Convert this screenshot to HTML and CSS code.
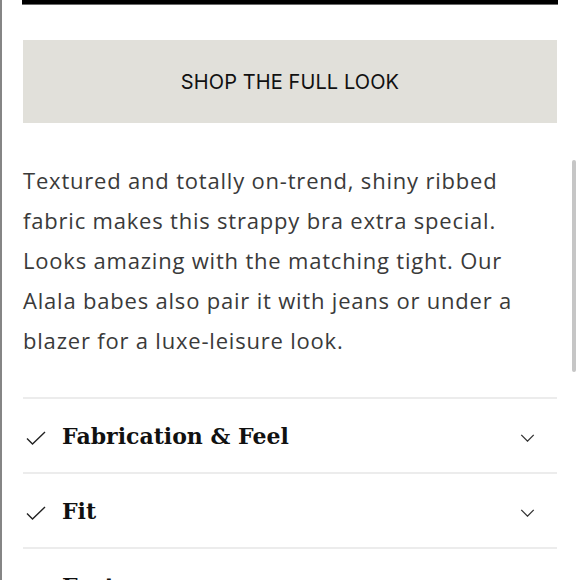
FILE: index.html
```html
<!DOCTYPE html>
<html lang="en">
<head>
<meta charset="utf-8">
<link rel="stylesheet" href="styles.css">
</head>
<body>
<div class="page">
  <div class="topbar"></div>
  <a class="shop-btn">SHOP THE FULL LOOK</a>
  <p class="desc">Textured and totally on-trend, shiny ribbed fabric makes this strappy bra extra special. Looks amazing with the matching tight. Our Alala babes also pair it with jeans or under a blazer for a luxe-leisure look.</p>
  <ul class="accordion">
    <li class="row">
      <svg class="check" viewBox="0 0 20 14" width="20" height="14"><path d="M1 7.5 L6.5 13 L19 1" fill="none" stroke="#222" stroke-width="1.4"/></svg>
      <span class="title">Fabrication &amp; Feel</span>
      <svg class="chev" viewBox="0 0 16 9" width="15" height="8"><path d="M1 1 L8 8 L15 1" fill="none" stroke="#333" stroke-width="1.5"/></svg>
    </li>
    <li class="row">
      <svg class="check" viewBox="0 0 20 14" width="20" height="14"><path d="M1 7.5 L6.5 13 L19 1" fill="none" stroke="#222" stroke-width="1.4"/></svg>
      <span class="title">Fit</span>
      <svg class="chev" viewBox="0 0 16 9" width="15" height="8"><path d="M1 1 L8 8 L15 1" fill="none" stroke="#333" stroke-width="1.5"/></svg>
    </li>
    <li class="row">
      <svg class="check" viewBox="0 0 20 14" width="20" height="14"><path d="M1 7.5 L6.5 13 L19 1" fill="none" stroke="#222" stroke-width="1.4"/></svg>
      <span class="title">Features</span>
      <svg class="chev" viewBox="0 0 16 9" width="15" height="8"><path d="M1 1 L8 8 L15 1" fill="none" stroke="#333" stroke-width="1.5"/></svg>
    </li>
  </ul>
  <div class="scrollbar"></div>
</div>
</body>
</html>
```
FILE: styles.css
```css
html, body {
  margin: 0;
  padding: 0;
  background: #fff;
  height: 580px;
  overflow: hidden;
}
.page {
  position: relative;
  height: 580px;
  border-left: 2px solid #858585;
  padding: 0 23px 0 21px;
  box-sizing: border-box;
  width: 580px;
}
.topbar {
  height: 5px;
  background: #000;
  margin: 0 -1px;
  border-bottom: 1px solid #6a6a6a;
  box-sizing: border-box;
}
.shop-btn {
  display: flex;
  align-items: center;
  justify-content: center;
  margin-top: 35px;
  height: 83px;
  background: #e1e0da;
  color: #111;
  font-family: Inter, "Liberation Sans", sans-serif;
  font-size: 20px;
  letter-spacing: 0.1px;
}
.desc {
  margin: 37px 0 0;
  padding-right: 20px;
  font-family: "Open Sans", "Liberation Sans", sans-serif;
  font-size: 22px;
  line-height: 40px;
  color: #3a3a3a;
  letter-spacing: 0.8px;
}
.accordion {
  list-style: none;
  margin: 37px 0 0;
  padding: 0;
}
.row {
  display: flex;
  align-items: center;
  height: 75px;
  border-top: 2px solid #ececec;
  box-sizing: border-box;
  padding: 0 22px 0 3px;
}
.check {
  flex: none;
  margin-top: 4px;
}
.title {
  flex: 1;
  margin-left: 16px;
  font-family: "DejaVu Serif", "Liberation Serif", serif;
  font-weight: bold;
  font-size: 22px;
  color: #111;
}
.chev {
  flex: none;
  margin-top: 4px;
}
.scrollbar {
  position: absolute;
  right: 4px;
  top: 160px;
  width: 4px;
  height: 212px;
  border-radius: 2px;
  background: #c6c6c6;
}
```
